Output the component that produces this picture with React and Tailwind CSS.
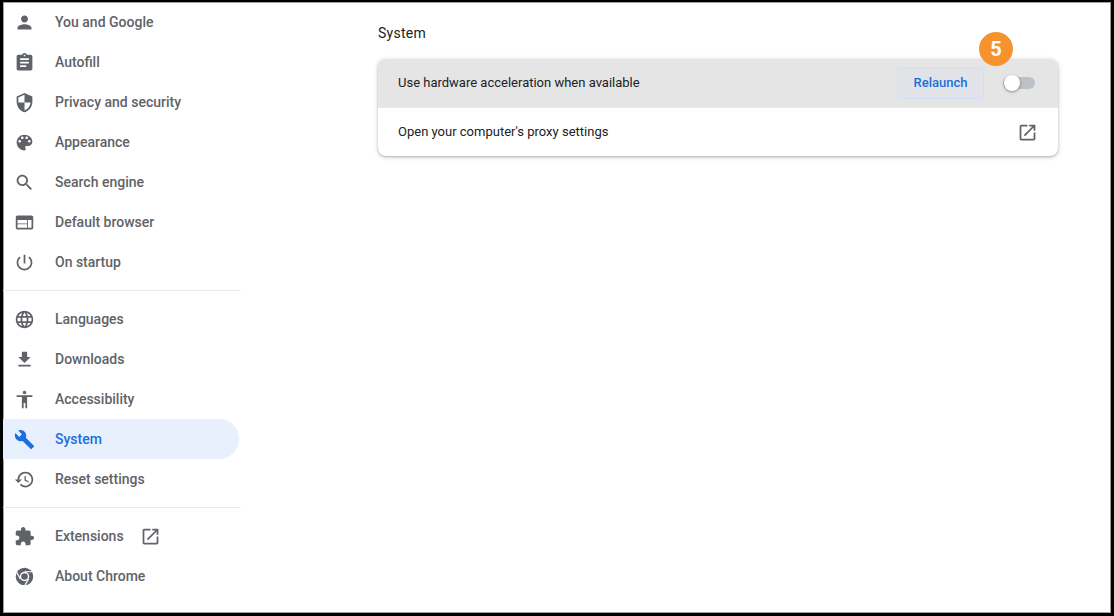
const ICONS = {
  person: 'M12 12c2.21 0 4-1.79 4-4s-1.79-4-4-4-4 1.79-4 4 1.79 4 4 4zm0 2c-2.67 0-8 1.34-8 4v2h16v-2c0-2.66-5.33-4-8-4z',
  assignment: 'M19 3h-4.18C14.4 1.84 13.3 1 12 1c-1.3 0-2.4.84-2.82 2H5c-1.1 0-2 .9-2 2v14c0 1.1.9 2 2 2h14c1.1 0 2-.9 2-2V5c0-1.1-.9-2-2-2zm-7 0c.55 0 1 .45 1 1s-.45 1-1 1-1-.45-1-1 .45-1 1-1zm2 14H7v-2h7v2zm3-4H7v-2h10v2zm0-4H7V7h10v2z',
  security: 'M12 1L3 5v6c0 5.55 3.84 10.74 9 12 5.16-1.26 9-6.45 9-12V5l-9-4zm0 10.99h7c-.53 4.12-3.28 7.79-7 8.94V12H5V6.3l7-3.11v8.8z',
  palette: 'M12 3c-4.97 0-9 4.03-9 9s4.03 9 9 9c.83 0 1.5-.67 1.5-1.5 0-.39-.15-.74-.39-1.01-.23-.26-.38-.61-.38-.99 0-.83.67-1.5 1.5-1.5H16c2.76 0 5-2.24 5-5 0-4.42-4.03-8-9-8zm-5.5 9c-.83 0-1.5-.67-1.5-1.5S5.67 9 6.5 9 8 9.67 8 10.5 7.33 12 6.5 12zm3-4C8.67 8 8 7.33 8 6.5S8.67 5 9.5 5s1.5.67 1.5 1.5S10.33 8 9.5 8zm5 0c-.83 0-1.5-.67-1.5-1.5S13.67 5 14.5 5s1.5.67 1.5 1.5S15.33 8 14.5 8zm3 4c-.83 0-1.5-.67-1.5-1.5S16.67 9 17.5 9s1.5.67 1.5 1.5-.67 1.5-1.5 1.5z',
  search: 'M15.5 14h-.79l-.28-.27C15.41 12.59 16 11.11 16 9.5 16 5.91 13.09 3 9.5 3S3 5.91 3 9.5 5.91 16 9.5 16c1.61 0 3.09-.59 4.23-1.57l.27.28v.79l5 4.99L20.49 19l-4.99-5zm-6 0C7.01 14 5 11.99 5 9.5S7.01 5 9.5 5 14 7.01 14 9.5 11.99 14 9.5 14z',
  web: 'M20 4H4c-1.1 0-1.99.9-1.99 2L2 18c0 1.1.9 2 2 2h16c1.1 0 2-.9 2-2V6c0-1.1-.9-2-2-2zm-5 14H4v-4h11v4zm0-5H4V9h11v4zm5 5h-4V9h4v9z',
  power: 'M13 3h-2v10h2V3zm4.83 2.17l-1.42 1.42C17.99 7.86 19 9.81 19 12c0 3.87-3.13 7-7 7s-7-3.13-7-7c0-2.19 1.01-4.14 2.58-5.42L6.17 5.17C4.23 6.82 3 9.26 3 12c0 4.97 4.03 9 9 9s9-4.03 9-9c0-2.74-1.23-5.18-3.17-6.83z',
  language: 'M11.99 2C6.47 2 2 6.48 2 12s4.47 10 9.99 10C17.52 22 22 17.52 22 12S17.52 2 11.99 2zm6.93 6h-2.95c-.32-1.25-.78-2.45-1.38-3.56 1.84.63 3.37 1.91 4.33 3.56zM12 4.04c.83 1.2 1.48 2.53 1.91 3.96h-3.82c.43-1.43 1.08-2.76 1.91-3.96zM4.26 14C4.1 13.36 4 12.69 4 12s.1-1.36.26-2h3.38c-.08.66-.14 1.32-.14 2 0 .68.06 1.34.14 2H4.26zm.82 2h2.95c.32 1.25.78 2.45 1.38 3.56-1.84-.63-3.37-1.9-4.33-3.56zm2.95-8H5.08c.96-1.66 2.49-2.93 4.33-3.56C8.81 5.55 8.35 6.75 8.03 8zM12 19.96c-.83-1.2-1.48-2.53-1.91-3.96h3.82c-.43 1.43-1.08 2.76-1.91 3.96zM14.34 14H9.66c-.09-.66-.16-1.32-.16-2 0-.68.07-1.35.16-2h4.68c.09.65.16 1.32.16 2 0 .68-.07 1.34-.16 2zm.25 5.56c.6-1.11 1.06-2.31 1.38-3.56h2.95c-.96 1.65-2.49 2.93-4.33 3.56zM16.36 14c.08-.66.14-1.32.14-2 0-.68-.06-1.34-.14-2h3.38c.16.64.26 1.31.26 2s-.1 1.36-.26 2h-3.38z',
  download: 'M19 9h-4V3H9v6H5l7 7 7-7zM5 18v2h14v-2H5z',
  accessibility: 'M12 2c1.1 0 2 .9 2 2s-.9 2-2 2-2-.9-2-2 .9-2 2-2zm9 7h-6v13h-2v-6h-2v6H9V9H3V7h18v2z',
  build: 'M22.7 19l-9.1-9.1c.9-2.3.4-5-1.5-6.9-2-2-5-2.4-7.4-1.3L9 6 6 9 1.6 4.7C.4 7.1.9 10.1 2.9 12.1c1.9 1.9 4.6 2.4 6.9 1.5l9.1 9.1c.4.4 1 .4 1.4 0l2.3-2.3c.5-.4.5-1.1.1-1.4z',
  restore: 'M13 3c-4.97 0-9 4.03-9 9H1l3.89 3.89.07.14L9 12H6c0-3.87 3.13-7 7-7s7 3.13 7 7-3.13 7-7 7c-1.93 0-3.68-.79-4.94-2.06l-1.42 1.42C8.27 19.99 10.51 21 13 21c4.97 0 9-4.03 9-9s-4.03-9-9-9zm-1 5v5l4.28 2.54.72-1.21-3.5-2.08V8H12z',
  extension: 'M20.5 11H19V7c0-1.1-.9-2-2-2h-4V3.5C13 2.12 11.88 1 10.5 1S8 2.12 8 3.5V5H4c-1.1 0-1.99.9-1.99 2v3.8H3.5c1.49 0 2.7 1.21 2.7 2.7s-1.21 2.7-2.7 2.7H2V20c0 1.1.9 2 2 2h3.8v-1.5c0-1.49 1.21-2.7 2.7-2.7 1.49 0 2.7 1.21 2.7 2.7V22H17c1.1 0 2-.9 2-2v-4h1.5c1.38 0 2.5-1.12 2.5-2.5S21.88 11 20.5 11z',
  openInNew: 'M19 19H5V5h7V3H5c-1.11 0-2 .9-2 2v14c0 1.1.89 2 2 2h14c1.1 0 2-.9 2-2v-7h-2v7zM14 3v2h3.59l-9.83 9.83 1.41 1.41L19 6.41V10h2V3h-7z',
};

function Icon({ name, className }) {
  return (
    <svg viewBox="0 0 24 24" fill="currentColor" className={className}>
      <path d={ICONS[name]} />
    </svg>
  );
}

function ChromeIcon({ className }) {
  return (
    <svg viewBox="0 0 24 24" className={className}>
      <circle cx="12" cy="12" r="10" fill="currentColor" />
      <circle cx="12" cy="12" r="5.4" fill="#fff" />
      <circle cx="12" cy="12" r="3.8" fill="currentColor" />
      <path d="M12 6.6h9.2M7.3 14.7L2.7 6.8M16.7 14.7l-4.6 8" stroke="#fff" strokeWidth="1.3" fill="none" />
    </svg>
  );
}

function NavItem({ icon, label, active, external }) {
  return (
    <div
      className={`flex h-10 items-center rounded-r-[20px] ${
        active ? 'bg-[#e8f0fe] text-[#1a6fdf]' : 'text-[#5f6368]'
      }`}
    >
      <div className="flex w-[43px] shrink-0 justify-center">
        {icon === 'chrome' ? (
          <ChromeIcon className="h-[21px] w-[21px]" />
        ) : (
          <Icon name={icon} className="h-[21px] w-[21px]" />
        )}
      </div>
      <span className="ml-[9px] text-sm font-medium">{label}</span>
      {external && <Icon name="openInNew" className="ml-4 h-[21px] w-[21px]" />}
    </div>
  );
}

function Divider() {
  return <div className="my-2 h-px w-[238px] bg-[#e8eaed]" />;
}

export default function App() {
  return (
    <div className="flex h-[616px] w-[1114px] overflow-hidden border-t-2 border-r-[3px] border-b-[3px] border-l-[3px] border-black bg-white font-['Roboto',sans-serif] shadow-[inset_1px_1px_0_#a0a0a0,inset_-1px_-1px_0_#a0a0a0]">
      <nav className="w-[236px] shrink-0">
        <NavItem icon="person" label="You and Google" />
        <NavItem icon="assignment" label="Autofill" />
        <NavItem icon="security" label="Privacy and security" />
        <NavItem icon="palette" label="Appearance" />
        <NavItem icon="search" label="Search engine" />
        <NavItem icon="web" label="Default browser" />
        <NavItem icon="power" label="On startup" />
        <Divider />
        <NavItem icon="language" label="Languages" />
        <NavItem icon="download" label="Downloads" />
        <NavItem icon="accessibility" label="Accessibility" />
        <NavItem icon="build" label="System" active />
        <NavItem icon="restore" label="Reset settings" />
        <Divider />
        <NavItem icon="extension" label="Extensions" external />
        <NavItem icon="chrome" label="About Chrome" />
      </nav>

      <main className="ml-[139px] w-[680px] shrink-0">
        <h2 className="mt-[22px] text-[14px] leading-[18px] tracking-[0.25px] text-[#202124]">System</h2>

        <div className="relative mt-[17px] rounded-lg bg-white shadow-[0_1px_2px_rgba(60,64,67,0.3),0_1px_4px_1px_rgba(60,64,67,0.15)]">
          <div className="flex h-[48px] items-center rounded-t-lg bg-[#e5e5e5] pl-5 pr-[23px]">
            <span className="flex-1 text-[13px] text-[#202124]">Use hardware acceleration when available</span>
            <button className="flex h-8 w-[87px] items-center justify-center rounded-[4px] border border-solid border-[#cfe0fa] bg-[#e1e3e9] text-[13px] font-medium text-[#1a6fdf]">
              Relaunch
            </button>
            <div className="relative ml-[19px] h-3 w-8 rounded-full bg-[#bdc1c6]">
              <div className="absolute top-[-2px] left-[1px] h-4 w-4 rounded-full bg-white shadow-[0_1px_3px_rgba(0,0,0,0.4)]" />
            </div>
          </div>
          <div className="flex h-[49px] items-center border-t border-[#e8eaed] pl-5 pr-5">
            <span className="flex-1 text-[13px] text-[#202124]">Open your computer's proxy settings</span>
            <Icon name="openInNew" className="h-[21px] w-[21px] text-[#5f6368]" />
          </div>

          <div className="absolute top-[-27px] right-[45px] flex h-[34px] w-[34px] items-center justify-center rounded-full bg-[#f7932e] text-[20px] font-bold text-white">
            5
          </div>
        </div>
      </main>
    </div>
  );
}
